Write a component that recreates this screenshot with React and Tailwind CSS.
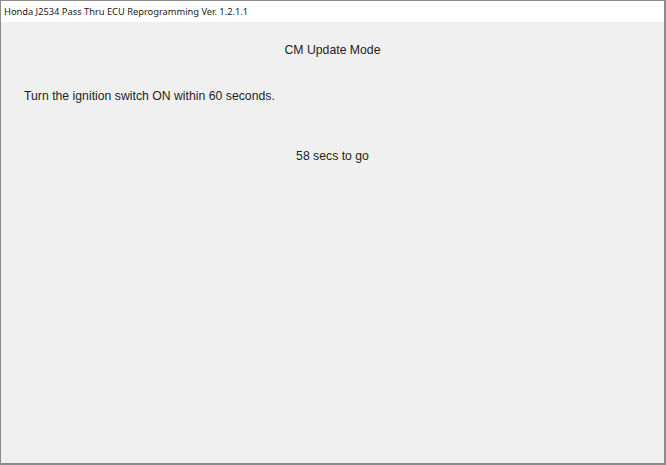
export default function App() {
  return (
    <div className="flex h-[465px] w-[666px] flex-col border border-[#8c8c8c] border-r-2 border-b-2 bg-[#f0f0f0]">
      <div className="flex h-[21px] items-center bg-white pl-[3px] font-['Noto_Sans',sans-serif] text-[9.3px] text-[#1a1a1a]">
        Honda J2534 Pass Thru ECU Reprogramming Ver. 1.2.1.1
      </div>
      <div className="flex flex-1 flex-col font-['Liberation_Sans',Arial,sans-serif] text-[12.25px] text-[#1e1e1e]">
        <div className="mt-[19px] text-center">CM Update Mode</div>
        <div className="mt-[28px] pl-[23px]">Turn the ignition switch ON within 60 seconds.</div>
        <div className="mt-[41px] text-center">58 secs to go</div>
      </div>
    </div>
  );
}
